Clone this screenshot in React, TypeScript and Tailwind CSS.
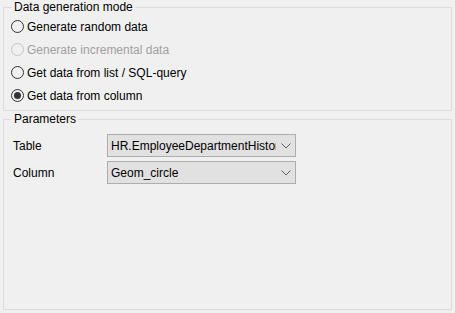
import React from "react";

function Radio({ label, checked = false, disabled = false }: { label: string; checked?: boolean; disabled?: boolean }) {
  return (
    <div className="flex h-[23px] items-center">
      <span
        className={`flex h-[13px] w-[13px] items-center justify-center rounded-full border bg-[#f0f0f0] ${
          disabled ? "border-[#c4c4c4]" : "border-[#333333]"
        }`}
      >
        {checked && <span className="h-[7px] w-[7px] rounded-full bg-[#333333]" />}
      </span>
      <span className={`ml-[3px] ${disabled ? "text-[#a0a0a0]" : "text-black"}`}>{label}</span>
    </div>
  );
}

function Combo({ value }: { value: string }) {
  return (
    <div className="flex h-[23px] w-[189px] items-center border border-[#adadad] bg-[#e1e1e1] pl-[3px] pr-[4px]">
      <span className="flex-1 overflow-hidden whitespace-nowrap">{value}</span>
      <svg width="10" height="6" viewBox="0 0 10 6" className="ml-[5px] shrink-0">
        <path d="M0.5 0.5 L5 5 L9.5 0.5" fill="none" stroke="#606060" strokeWidth="1" />
      </svg>
    </div>
  );
}

export default function App() {
  return (
    <div
      className="h-[313px] w-[455px] bg-[#f0f0f0] px-[3px] text-[12px] leading-[14px] text-black"
      style={{ fontFamily: '"Segoe UI", "Liberation Sans", Arial, sans-serif' }}
    >
      <fieldset className="h-[111px] border border-[#dcdcdc] pl-[7px]">
        <legend className="ml-[1px] px-[2px] leading-[14px]">Data generation mode</legend>
        <div className="mt-[1px] flex flex-col">
          <Radio label="Generate random data" />
          <Radio label="Generate incremental data" disabled />
          <Radio label="Get data from list / SQL-query" />
          <Radio label="Get data from column" checked />
        </div>
      </fieldset>
      <fieldset className="mt-[1px] h-[198px] border border-[#dcdcdc] pl-[9px]">
        <legend className="ml-[-1px] px-[2px] leading-[14px]">Parameters</legend>
        <div className="mt-[8px] flex flex-col gap-[4px]">
          <div className="flex items-center">
            <span className="w-[94px]">Table</span>
            <Combo value="HR.EmployeeDepartmentHistory" />
          </div>
          <div className="flex items-center">
            <span className="w-[94px]">Column</span>
            <Combo value="Geom_circle" />
          </div>
        </div>
      </fieldset>
    </div>
  );
}
